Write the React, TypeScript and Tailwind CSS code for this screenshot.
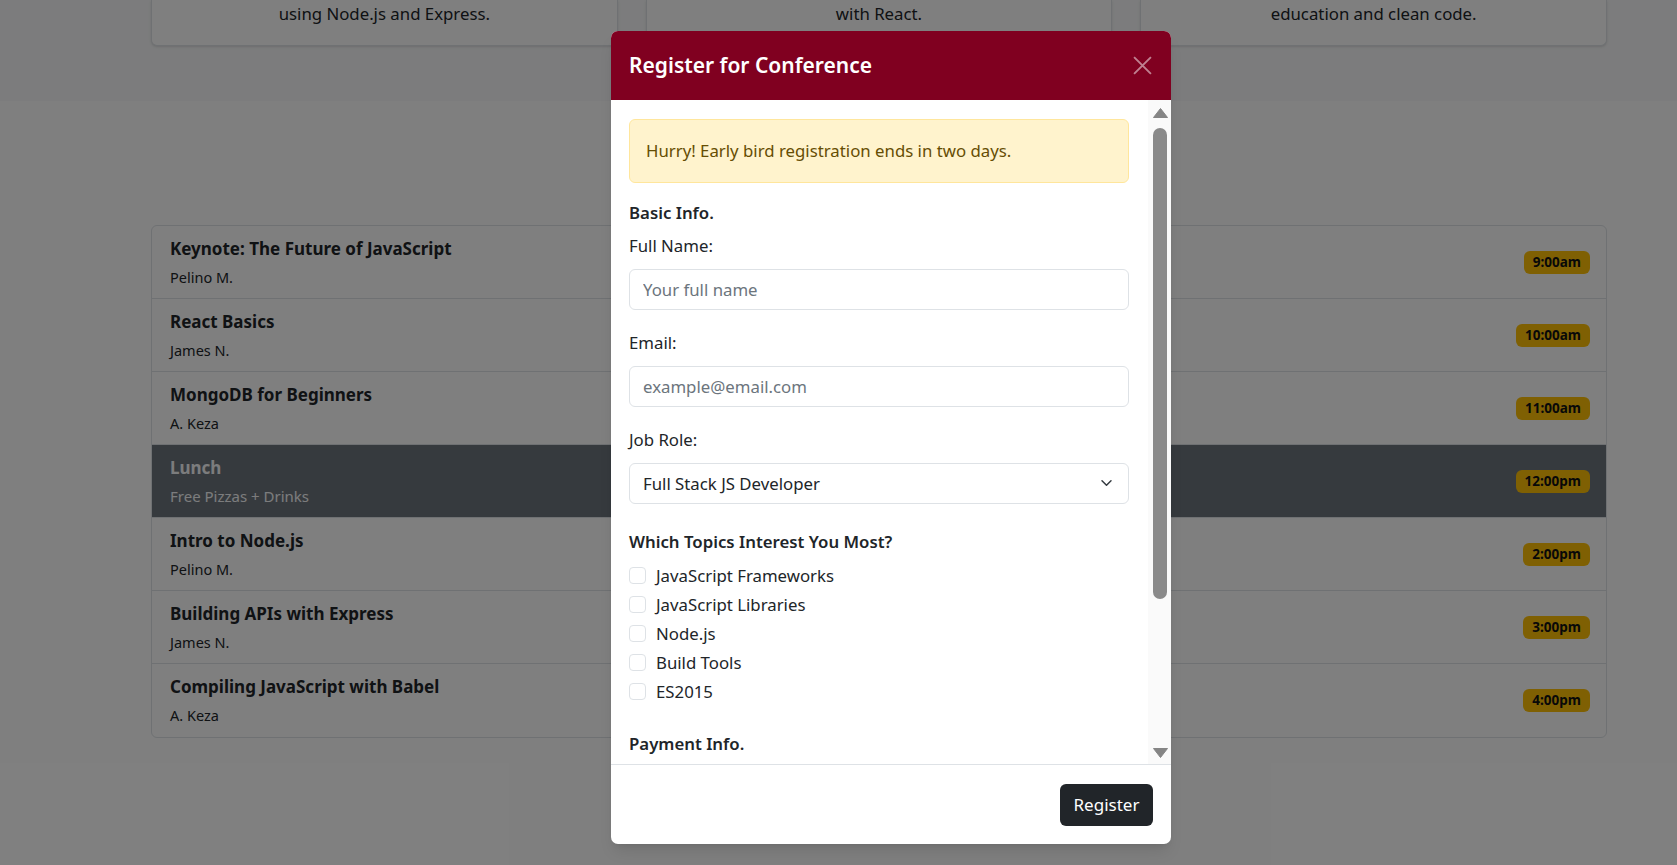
import { useState } from "react"

const talks = [
  { title: "Keynote: The Future of JavaScript", who: "Pelino M.", time: "9:00am" },
  { title: "React Basics", who: "James N.", time: "10:00am" },
  { title: "MongoDB for Beginners", who: "A. Keza", time: "11:00am" },
  { title: "Lunch", who: "Free Pizzas + Drinks", time: "12:00pm", lunch: true },
  { title: "Intro to Node.js", who: "Pelino M.", time: "2:00pm" },
  { title: "Building APIs with Express", who: "James N.", time: "3:00pm" },
  { title: "Compiling JavaScript with Babel", who: "A. Keza", time: "4:00pm" },
]

const topics = ["JavaScript Frameworks", "JavaScript Libraries", "Node.js", "Build Tools", "ES2015"]

const Card = ({ text }: { text: string }) => {
  return <div className="bg-white border border-t-0 border-[#dee2e6] rounded-b-[6px] shadow-sm text-center pt-[2px] pb-[19px] leading-[24px] text-[16.8px] text-[#212529]">
    {text}
  </div>
}

const Row = ({ t, last }: { t: typeof talks[number]; last: boolean }) => {
  return <div className={`h-[73px] flex justify-between items-center pl-[18px] pr-4 ${last ? "" : "border-b border-[#dee2e6]"} ${t.lunch ? "bg-[#6c757d] text-[#f8f9fa]" : "text-[#212529]"}`}>
    <div className="self-start pt-[8px]">
      <div className="text-[17px] font-bold leading-[30px]">{t.title}</div>
      <div className={`${t.lunch ? "text-[15px]" : "text-[14.5px]"} leading-[26px]`}>{t.who}</div>
    </div>
    <span className="h-[23px] px-[9px] flex items-center rounded-[6px] bg-[#ffc107] text-[#111] text-[13.5px] font-bold">{t.time}</span>
  </div>
}

export default function App() {
  const [role, setRole] = useState("fs")
  return <div className="relative w-[1677px] h-[865px] overflow-hidden bg-white font-['Noto_Sans',sans-serif]">
    <div className="h-[101px] bg-[#f8f9fa]">
      <div className="ml-[151px] w-[1456px] grid grid-cols-3 gap-[28px]">
        <Card text="using Node.js and Express." />
        <Card text="with React." />
        <Card text="education and clean code." />
      </div>
    </div>

    <div className="ml-[151px] w-[1456px] mt-[124px] border border-[#dee2e6] rounded-[6px] overflow-hidden">
      {talks.map((t, i) => <Row key={t.time} t={t} last={i === talks.length - 1} />)}
    </div>

    {/* backdrop */}
    <div className="absolute inset-0 bg-black/50"></div>

    {/* modal */}
    <div className="absolute left-[611px] top-[31px] w-[560px] bg-white rounded-[7px] overflow-hidden shadow-lg">
      <div className="h-[69px] bg-[#800020] flex items-center justify-between pl-[18px] pr-[19px]">
        <h5 className="text-white text-[21px] font-semibold">Register for Conference</h5>
        <svg width="19" height="19" viewBox="0 0 18 18" className="opacity-50">
          <path d="M1 1 L17 17 M17 1 L1 17" stroke="white" strokeWidth="1.8" />
        </svg>
      </div>

      <div className="h-[664px] flex">
        <div className="w-[537px] pl-[18px] pr-[19px] pt-[19px] overflow-hidden text-[16.8px] text-[#212529]">
          <div className="h-[64px] flex items-center px-[16px] border border-[#ffe69c] bg-[#fff3cd] text-[#664d03] rounded-[6px]">
            Hurry! Early bird registration ends in two days.
          </div>

          <div className="mt-[18px] leading-[24px] font-semibold">Basic Info.</div>
          <div className="mt-[9px] leading-[24px]">Full Name:</div>
          <input className="mt-[11px] w-full h-[41px] px-[13px] border border-[#dee2e6] rounded-[6px] placeholder:text-[#6c757d] outline-none" placeholder="Your full name" />

          <div className="mt-[21px] leading-[24px]">Email:</div>
          <input className="mt-[11px] w-full h-[41px] px-[13px] border border-[#dee2e6] rounded-[6px] placeholder:text-[#6c757d] outline-none" placeholder="example@email.com" />

          <div className="mt-[21px] leading-[24px]">Job Role:</div>
          <div className="relative mt-[11px]">
            <select value={role} onChange={e => setRole(e.target.value)} className="appearance-none w-full h-[41px] px-[13px] border border-[#dee2e6] rounded-[6px] bg-white text-[#212529] outline-none">
              <option value="fs">Full Stack JS Developer</option>
              <option value="fe">Front End Developer</option>
              <option value="be">Back End Developer</option>
            </select>
            <svg className="absolute right-[15px] top-[14px]" width="15" height="12" viewBox="0 0 16 16">
              <path d="M2 5l6 6 6-6" fill="none" stroke="#343a40" strokeWidth="2" strokeLinecap="round" strokeLinejoin="round" />
            </svg>
          </div>

          <div className="mt-[26px] leading-[24px] font-semibold">Which Topics Interest You Most?</div>
          <div className="mt-[7px]">
            {topics.map(tp => <label key={tp} className="h-[29px] flex items-center gap-[10px]">
              <input type="checkbox" className="appearance-none w-[17px] h-[17px] border border-[#dee2e6] rounded-[4px] bg-white" />
              <span>{tp}</span>
            </label>)}
          </div>

          <div className="mt-[26px] leading-[24px] font-semibold">Payment Info.</div>
        </div>

        {/* scrollbar */}
        <div className="w-[23px] bg-[#fafafa] flex flex-col items-center pl-[1px]">
          <svg className="mt-[8px]" width="15" height="10" viewBox="0 0 15 10"><polygon points="7.5,0.5 14.5,9.5 0.5,9.5" fill="#858585" stroke="#858585" strokeLinejoin="round" /></svg>
          <div className="mt-[10px] w-[14px] h-[471px] rounded-full bg-[#8a8a8a]"></div>
          <div className="flex-1"></div>
          <svg className="mb-[6px]" width="15" height="10" viewBox="0 0 15 10"><polygon points="0.5,0.5 14.5,0.5 7.5,9.5" fill="#858585" stroke="#858585" strokeLinejoin="round" /></svg>
        </div>
      </div>

      <div className="h-[80px] border-t border-[#dee2e6] flex items-center justify-end pr-[18px]">
        <button className="h-[42px] w-[93px] bg-[#212529] text-white rounded-[6px] text-[17px]">Register</button>
      </div>
    </div>
  </div>
}
